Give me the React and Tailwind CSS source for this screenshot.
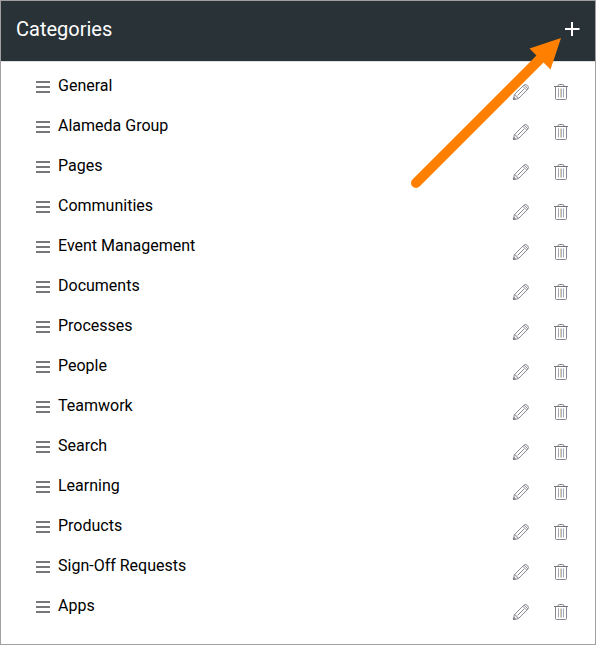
import React from 'react';

const categories = [
  'General',
  'Alameda Group',
  'Pages',
  'Communities',
  'Event Management',
  'Documents',
  'Processes',
  'People',
  'Teamwork',
  'Search',
  'Learning',
  'Products',
  'Sign-Off Requests',
  'Apps',
];

function DragHandle() {
  return (
    <span className="mt-[15px] flex h-3 w-3.5 shrink-0 flex-col justify-between">
      <span className="h-0.5 bg-[#77767a]" />
      <span className="h-0.5 bg-[#77767a]" />
      <span className="h-0.5 bg-[#77767a]" />
    </span>
  );
}

function PencilIcon() {
  return (
    <svg className="size-4" viewBox="0 0 16 16" fill="none" stroke="#7e7e86" strokeWidth="0.9" strokeLinejoin="round">
      <path d="M.5 15.5 1.3 10.7 10.8 1.2Q12.4-.2 14 1.2L14.8 2Q16.2 3.6 14.8 5.2L5.3 14.7Z" />
      <path d="M1.3 10.7Q3.4 10.8 3.3 12.7Q5.2 12.6 5.3 14.7M9.8 2.2l4 4M11.1 1l3.9 3.9M4.6 11.4l6.6-6.6" />
      <path d="M.5 15.5l.4-2 1.6 1.6z" fill="#77777d" />
    </svg>
  );
}

function TrashIcon() {
  return (
    <svg className="h-4 w-3.5" viewBox="0 0 14 16" fill="none" stroke="#737378">
      <path d="M0 2.5h14" />
      <path d="M4 2.5V1.9Q4 .5 5.4.5h3.2Q10 .5 10 1.9v.6" strokeWidth="0.9" />
      <path d="M1.5 2.5v11.9q0 1.1 1.1 1.1h8.8q1.1 0 1.1-1.1V2.5" stroke="#85858e" />
      <path d="M4.5 4.5v9M9.5 4.5v9" stroke="#a3a3b0" />
      <path d="M6.5 4.5v9" stroke="#dfcda5" />
      <path d="M7.5 4.5v9" stroke="#a9b3c8" />
    </svg>
  );
}

export default function App() {
  return (
    <div className="relative h-[645px] w-[596px] border border-[#a0a0a0] bg-white font-['Roboto',sans-serif] text-black">
      <header className="flex h-[61px] items-start justify-between border-b border-[#dedfe0] bg-[#293237] pr-[15px] pl-[15px] text-white">
        <h1 className="mt-3.5 text-[20px] leading-7 font-normal">Categories</h1>
        <svg className="mt-[21px] h-3.5 w-[15px]" viewBox="0 0 15 14" fill="none" stroke="white" strokeWidth="2">
          <path d="M0 7h14.5M7 0v14" />
        </svg>
      </header>
      <ul className="pt-1 pr-[27px] pl-[35px]">
        {categories.map((name) => (
          <li key={name} className="flex h-10 items-start">
            <DragHandle />
            <span className="mt-2 ml-2 grow text-[16px] leading-6">{name}</span>
            <span className="mt-[18px] flex gap-[25px]">
              <PencilIcon />
              <TrashIcon />
            </span>
          </li>
        ))}
      </ul>
      <svg className="pointer-events-none absolute top-[35px] left-[407px] h-[155px] w-[155px]" viewBox="0 0 155 155" fill="none">
        <path d="M8 147 134 21" stroke="#ff8000" strokeWidth="10" strokeLinecap="round" />
        <path d="M153 2 121.5 12.5 142.5 33.5Z" fill="#ff8000" />
      </svg>
    </div>
  );
}
